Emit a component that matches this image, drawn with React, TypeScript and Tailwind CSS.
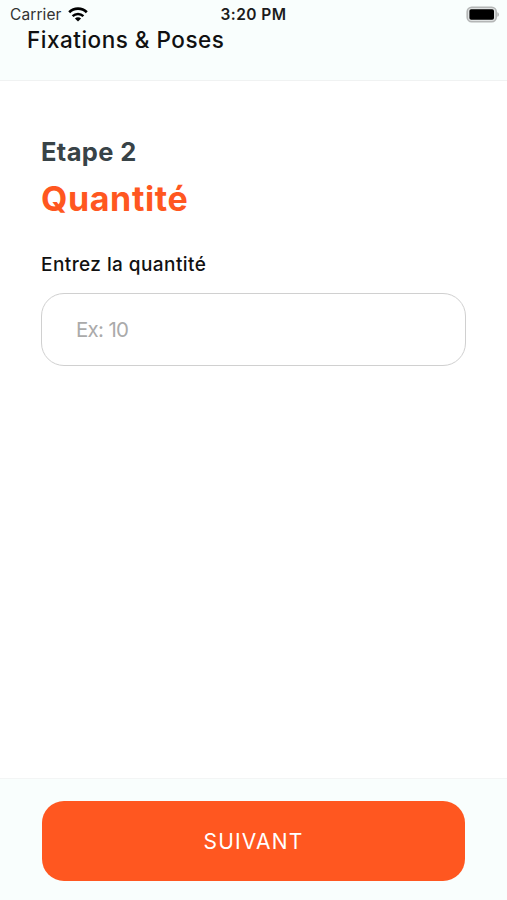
import { useState } from "react";

function WifiIcon() {
  return (
    <svg width="20" height="15" viewBox="0 0 20 15" fill="none">
      <path d="M1.2 5.3a12.6 12.6 0 0 1 17.6 0" stroke="#000" strokeWidth="2.7" />
      <path d="M4.6 9.1a7.8 7.8 0 0 1 10.8 0" stroke="#000" strokeWidth="2.5" />
      <path d="M10 14.6 6.9 11.5a4.4 4.4 0 0 1 6.2 0z" fill="#000" />
    </svg>
  );
}

function BatteryIcon() {
  return (
    <svg width="33" height="17" viewBox="0 0 33 17" fill="none">
      <rect x="1.2" y="1.2" width="29" height="14.6" rx="4.5" fill="#dfe2e2" stroke="#b4b6b6" strokeWidth="1.6" />
      <rect x="3.4" y="3.2" width="24.6" height="10.6" rx="1.8" fill="#000" />
      <path d="M31.3 6.2c2.2.6 2.2 4 0 4.6z" fill="#b4b6b6" />
    </svg>
  );
}

function StatusBar() {
  return (
    <div className="grid grid-cols-3 items-center h-[29px] px-2">
      <div className="flex items-center gap-[6px] pl-[2px]">
        <span className="text-[15.5px] leading-none text-[#333] tracking-[0.1px]">
          Carrier
        </span>
        <WifiIcon />
      </div>
      <span className="text-center text-[15.5px] leading-none font-semibold text-[#1c1c1c] tracking-[0.45px]">
        3:20 PM
      </span>
      <div className="flex justify-end">
        <BatteryIcon />
      </div>
    </div>
  );
}

export default function App() {
  const [quantity, setQuantity] = useState("");

  return (
    <div className="flex flex-col h-[900px] w-full bg-white font-['Inter',sans-serif]">
      <header className="h-[81px] shrink-0 bg-[#f9fefd] border-b border-[#f0f2f2]">
        <StatusBar />
        <h1 className="-mt-px pl-[27px] text-[22.5px] leading-[24px] font-medium text-[#111] tracking-[0.5px] whitespace-nowrap">
          Fixations & Poses
        </h1>
      </header>

      <main className="flex-1 px-[41px] pt-[55px]">
        <h2 className="text-[25.5px] leading-[32px] font-bold text-[#384347] tracking-[0.35px]">
          Etape 2
        </h2>
        <h3 className="mt-[11px] text-[34px] leading-[40px] font-bold text-[#ff5720] tracking-[0.6px]">
          Quantité
        </h3>
        <label
          htmlFor="quantity"
          className="block mt-[34px] text-[19px] leading-[24px] font-medium text-[#111] tracking-[0.43px]"
        >
          Entrez la quantité
        </label>
        <input
          id="quantity"
          value={quantity}
          onChange={(e) => setQuantity(e.target.value)}
          placeholder="Ex: 10"
          className="block mt-[16px] w-full h-[73px] px-[34px] rounded-[23px] border-[1.5px] border-[#d0d0d0] bg-white text-[20.5px] tracking-[-0.7px] text-black placeholder:text-[#aaa] outline-none"
        />
      </main>

      <footer className="h-[122px] shrink-0 bg-[#f9fefd] border-t border-[#f3f5f5] pt-[22px] px-[42px]">
        <button className="block w-full h-[80px] pt-[2px] rounded-[22px] bg-[#ff5720] text-white text-[21px] font-normal tracking-[1.2px]">
          SUIVANT
        </button>
      </footer>
    </div>
  );
}
